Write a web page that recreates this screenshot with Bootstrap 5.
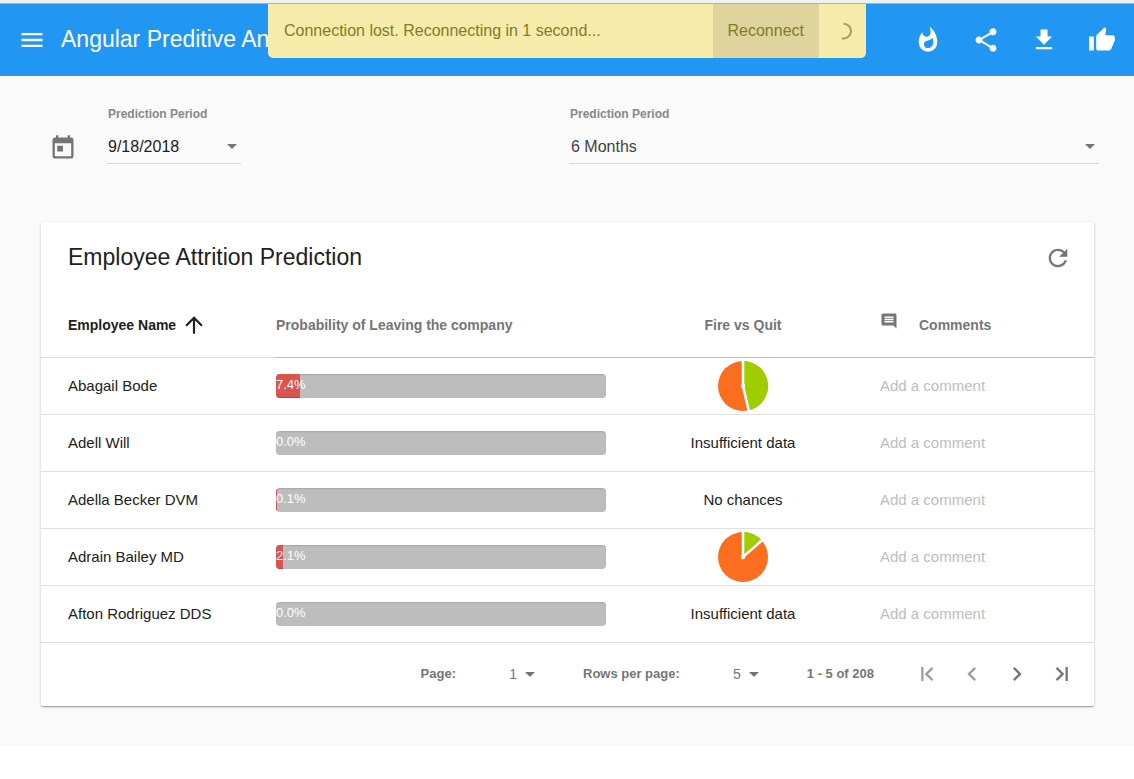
<!DOCTYPE html>
<html lang="en">
<head>
<meta charset="utf-8">
<meta name="viewport" content="width=device-width, initial-scale=1">
<title>Employee Attrition Prediction</title>
<link href="https://cdn.jsdelivr.net/npm/bootstrap@5.3.0/dist/css/bootstrap.min.css" rel="stylesheet">
<style>
  body { font-family: "Liberation Sans", Arial, sans-serif; font-size: 15px; line-height: 20px; color: #212121; background: #fff; }
  svg { display: block; fill: currentColor; }
  button { font: inherit; color: inherit; background: none; border: 0; padding: 0; }
  .window-edge { height: 4px; background: #f1f1f1; border-bottom: 1px solid #b2b2b2; }
  .app-bar { height: 72px; background: #2196f3; color: #fff; padding: 0 18px; }
  .app-title, .panel-title { font-size: 23px; line-height: 28px; font-weight: 400; margin: 0; padding-bottom: 2px; white-space: nowrap; }
  .app-title { margin-left: 15px; }
  .app-actions { gap: 30px; }
  .connection-toast { top: 4px; width: 598px; max-width: 100%; height: 54px; background: #f6ebab; color: #857b26; font-size: 16px; border-radius: 0 0 5px 5px; overflow: hidden; z-index: 5; }
  .connection-toast button { background: #dfd49d; padding: 0 15px; }
  .toast-wait { width: 47px; }
  .page-area { background: #fafafa; padding: 30px 40px 41px 41px; }
  .filters { margin: 0 -5px 58px -2px; }
  .field-label { font-size: 12px; line-height: 16px; font-weight: 700; color: #888; padding-left: 1px; margin-bottom: 8px; display: block; }
  .calendar-btn { padding: 0 18px 2px 10px; }
  .field-date { width: 134px; margin-left: 12px; }
  .field-control { width: 100%; height: 34px; border: 0; border-bottom: 1px solid #d8d8d8; border-radius: 0; background: transparent; font-size: 16px; color: #212121; padding: 0 30px 0 1px; appearance: none; outline: 0; }
  select.field-control { color: #424242; padding-left: 2px; }
  .caret { width: 10px; height: 5px; right: 4px; top: 14px; color: #757575; pointer-events: none; }
  .muted-ink { color: #757575; }
  .panel { background: #fff; border-radius: 2px; box-shadow: 0 1px 3px rgba(0,0,0,.2), 0 1px 1px rgba(0,0,0,.14), 0 2px 1px -1px rgba(0,0,0,.12); }
  .panel-head { height: 71px; padding: 0 22px 0 27px; }
  .grid-table { table-layout: fixed; width: 100%; }
  .grid-table th { height: 64px; font-size: 14px; color: #757575; border-bottom: 1px solid #bdbdbd; }
  .grid-table th:first-child { color: #212121; border-color: #e0e0e0; }
  .grid-table td { height: 57px; border-bottom: 1px solid #e0e0e0; }
  .grid-table tr > :nth-child(1) { padding-left: 27px; }
  .grid-table tr > :nth-child(2) { padding-right: 56px; }
  .grid-table tr > :nth-child(3) { text-align: center; }
  .grid-table tr > :nth-child(4) { padding-left: 56px; }
  .col-name { width: 234px; } .col-fire { width: 162px; } .col-note { width: 270px; }
  .sort-btn { gap: 5px; }
  .meter { height: 24px; background: #bdbdbd; border-radius: 4px; box-shadow: inset 0 1px 2px rgba(0,0,0,.12); }
  .meter .progress-bar { background: #d9534f; overflow: visible; text-align: left; color: #fff; font-size: 13px; line-height: 22px; justify-content: flex-start; box-shadow: inset 0 -1px 0 rgba(0,0,0,.15); }
  .note-btn { color: #bdbdbd; }
  .note-head { gap: 21px; }
  .note-icon { margin-bottom: 8px; }
  .pager { height: 63px; font-size: 13px; font-weight: 700; color: #757575; padding-right: 18px; }
  .pager-select { appearance: none; border: 0; background: transparent; width: 72px; padding: 0 18px 0 0; text-align: right; text-align-last: right; color: #757575; font-size: 14px; outline: 0; }
  .pager .caret { right: 0; top: 8px; }
  .pager-unit { margin-right: 48px; gap: 7px; }
  .pager-range { margin-right: 39px; }
  .pager-nav { gap: 17px; }
  .pager-nav button:disabled { opacity: .7; }
</style>
</head>
<body>
<div class="window-edge"></div>

<div class="connection-toast position-absolute start-50 translate-middle-x d-flex align-items-stretch" role="status">
  <span class="flex-grow-1 align-self-center ps-3">Connection lost. Reconnecting in 1 second...</span>
  <button type="button">Reconnect</button>
  <span class="toast-wait d-flex align-items-center justify-content-center">
    <svg width="18" height="18" viewBox="0 0 18 18" aria-hidden="true"><path d="M9.500 1.800a7.300 7.300 0 1 1-1.500 14.400" fill="none" stroke="#a69d56" stroke-width="2"/></svg>
  </span>
</div>

<header class="app-bar d-flex align-items-center">
  <button type="button" aria-label="Menu"><svg width="28" height="28" viewBox="0 0 24 24"><path d="M3 18h18v-2H3v2zm0-5h18v-2H3v2zm0-7v2h18V6H3z"/></svg></button>
  <h1 class="app-title">Angular Preditive An</h1>
  <div class="app-actions d-flex ms-auto">
    <button type="button" aria-label="Trending"><svg width="28" height="28" viewBox="0 0 24 24"><path d="M11.71,19C9.93,19 8.5,17.59 8.5,15.86C8.5,14.24 9.53,13.1 11.3,12.74C13.07,12.38 14.9,11.53 15.92,10.16C16.31,11.45 16.5,12.81 16.5,14.2C16.5,16.84 14.36,19 11.71,19M13.5,0.67C13.5,0.67 14.24,3.32 14.24,5.47C14.24,7.53 12.89,9.2 10.83,9.2C8.76,9.2 7.2,7.53 7.2,5.47L7.23,5.1C5.21,7.5 4,10.61 4,14A8,8 0 0,0 12,22A8,8 0 0,0 20,14C20,8.6 17.41,3.8 13.5,0.67Z"/></svg></button>
    <button type="button" aria-label="Share"><svg width="28" height="28" viewBox="0 0 24 24"><path d="M18 16.08c-.76 0-1.44.3-1.96.77L8.91 12.7c.05-.23.09-.46.09-.7s-.04-.47-.09-.7l7.05-4.11c.54.5 1.25.81 2.04.81 1.66 0 3-1.34 3-3s-1.34-3-3-3-3 1.34-3 3c0 .24.04.47.09.7L8.04 9.81C7.5 9.31 6.79 9 6 9c-1.66 0-3 1.34-3 3s1.34 3 3 3c.79 0 1.5-.31 2.04-.81l7.12 4.16c-.05.21-.08.43-.08.65 0 1.61 1.31 2.92 2.92 2.92s2.92-1.31 2.92-2.92-1.31-2.92-2.92-2.92z"/></svg></button>
    <button type="button" aria-label="Download"><svg width="28" height="28" viewBox="0 0 24 24"><path d="M19 9h-4V3H9v6H5l7 7 7-7zM5 18v2h14v-2H5z"/></svg></button>
    <button type="button" aria-label="Like"><svg width="28" height="28" viewBox="0 0 24 24"><path d="M1 21h4V9H1v12zm22-11c0-1.1-.9-2-2-2h-6.31l.95-4.57.03-.32c0-.41-.17-.79-.44-1.06L14.17 1 7.59 7.59C7.22 7.95 7 8.45 7 9v10c0 1.1.9 2 2 2h9c.83 0 1.54-.5 1.84-1.22l3.02-7.05c.09-.23.14-.47.14-.73v-2z"/></svg></button>
  </div>
</header>

<main class="page-area">
  <div class="filters row g-0">
    <div class="col-6 d-flex align-items-end">
      <button type="button" class="calendar-btn muted-ink" aria-label="Open calendar"><svg width="28" height="28" viewBox="0 0 24 24"><path d="M19 3h-1V1h-2v2H8V1H6v2H5c-1.11 0-1.99.9-1.99 2L3 19c0 1.1.89 2 2 2h14c1.1 0 2-.9 2-2V5c0-1.1-.9-2-2-2zm0 16H5V8h14v11zM7 10h5v5H7z"/></svg></button>
      <div class="field-date">
        <label class="field-label" for="start">Prediction Period</label>
        <div class="position-relative">
          <input class="field-control" id="start" type="text" value="9/18/2018">
          <svg class="caret position-absolute" viewBox="0 0 10 5"><path d="M0 0h10L5 5z"/></svg>
        </div>
      </div>
    </div>
    <div class="col-6">
      <label class="field-label" for="span">Prediction Period</label>
      <div class="position-relative">
        <select class="field-control" id="span"><option>6 Months</option></select>
        <svg class="caret position-absolute" viewBox="0 0 10 5"><path d="M0 0h10L5 5z"/></svg>
      </div>
    </div>
  </div>

  <section class="panel">
    <div class="panel-head d-flex align-items-center justify-content-between">
      <h2 class="panel-title">Employee Attrition Prediction</h2>
      <button type="button" class="muted-ink" aria-label="Refresh"><svg width="28" height="28" viewBox="0 0 24 24"><path d="M17.65 6.35C16.2 4.9 14.21 4 12 4c-4.42 0-7.99 3.58-7.99 8s3.57 8 7.99 8c3.73 0 6.84-2.55 7.73-6h-2.08c-.82 2.33-3.04 4-5.65 4-3.31 0-6-2.69-6-6s2.69-6 6-6c1.66 0 3.14.69 4.22 1.78L13 11h7V4l-2.35 2.35z"/></svg></button>
    </div>

    <table class="grid-table">
      <colgroup><col class="col-name"><col><col class="col-fire"><col class="col-note"></colgroup>
      <thead>
        <tr>
          <th scope="col"><button type="button" class="sort-btn d-flex align-items-center">Employee Name <svg width="26" height="26" viewBox="0 0 24 24"><path d="M4 12l1.41 1.41L11 7.83V20h2V7.83l5.58 5.59L20 12l-8-8-8 8z"/></svg></button></th>
          <th scope="col">Probability of Leaving the company</th>
          <th scope="col">Fire vs Quit</th>
          <th scope="col"><span class="note-head d-flex align-items-center"><svg class="note-icon" width="18" height="18" viewBox="0 0 24 24"><path d="M21.99 4c0-1.1-.89-2-1.99-2H4c-1.1 0-2 .9-2 2v12c0 1.1.9 2 2 2h14l4 4-.01-18zM18 14H6v-2h12v2zm0-3H6V9h12v2zm0-3H6V6h12v2z"/></svg>Comments</span></th>
        </tr>
      </thead>
      <tbody>
        <tr>
          <td>Abagail Bode</td>
          <td><div class="progress meter"><div class="progress-bar" style="width:7.4%">7.4%</div></div></td>
          <td><svg class="mx-auto" width="52" height="52" viewBox="0 0 52 52" role="img" aria-label="Fire versus quit"><circle cx="26" cy="26" r="25" fill="#fb6e20"/><path d="M26 26V1A25 25 0 0 1 31.620 50.360z" fill="#9fcd00"/><path d="M26 0v26l6 26" fill="none" stroke="#fff" stroke-width="2.6"/><circle cx="26" cy="26" r="2.2" fill="#fff"/></svg></td>
          <td><button type="button" class="note-btn">Add a comment</button></td>
        </tr>
        <tr>
          <td>Adell Will</td>
          <td><div class="progress meter"><div class="progress-bar" style="width:0%">0.0%</div></div></td>
          <td>Insufficient data</td>
          <td><button type="button" class="note-btn">Add a comment</button></td>
        </tr>
        <tr>
          <td>Adella Becker DVM</td>
          <td><div class="progress meter"><div class="progress-bar" style="width:0.1%">0.1%</div></div></td>
          <td>No chances</td>
          <td><button type="button" class="note-btn">Add a comment</button></td>
        </tr>
        <tr>
          <td>Adrain Bailey MD</td>
          <td><div class="progress meter"><div class="progress-bar" style="width:2.1%">2.1%</div></div></td>
          <td><svg class="mx-auto" width="52" height="52" viewBox="0 0 52 52" role="img" aria-label="Fire versus quit"><circle cx="26" cy="26" r="25" fill="#fb6e20"/><path d="M26 26V1A25 25 0 0 1 44.870 9.600z" fill="#9fcd00"/><path d="M26 0v26L46 8.6" fill="none" stroke="#fff" stroke-width="2.6"/><circle cx="26" cy="26" r="2.2" fill="#fff"/></svg></td>
          <td><button type="button" class="note-btn">Add a comment</button></td>
        </tr>
        <tr>
          <td>Afton Rodriguez DDS</td>
          <td><div class="progress meter"><div class="progress-bar" style="width:0%">0.0%</div></div></td>
          <td>Insufficient data</td>
          <td><button type="button" class="note-btn">Add a comment</button></td>
        </tr>
      </tbody>
    </table>

    <div class="pager d-flex align-items-center justify-content-end">
      <div class="pager-unit d-flex align-items-center">
        <label for="page">Page:</label>
        <div class="position-relative"><select class="pager-select" id="page"><option>1</option></select><svg class="caret position-absolute" viewBox="0 0 10 5"><path d="M0 0h10L5 5z"/></svg></div>
      </div>
      <div class="pager-unit d-flex align-items-center">
        <label for="rows">Rows per page:</label>
        <div class="position-relative"><select class="pager-select" id="rows"><option>5</option></select><svg class="caret position-absolute" viewBox="0 0 10 5"><path d="M0 0h10L5 5z"/></svg></div>
      </div>
      <span class="pager-range">1 - 5 of 208</span>
      <div class="pager-nav d-flex">
        <button type="button" aria-label="First page" disabled><svg width="28" height="28" viewBox="0 0 24 24"><path d="M7 6v12h2V6H7zm10.410 1.410L16 6l-6 6 6 6 1.410-1.410L12.830 12z"/></svg></button>
        <button type="button" aria-label="Previous page" disabled><svg width="28" height="28" viewBox="0 0 24 24"><path d="M15.410 7.410L14 6l-6 6 6 6 1.410-1.410L10.830 12z"/></svg></button>
        <button type="button" aria-label="Next page"><svg width="28" height="28" viewBox="0 0 24 24"><path d="M10 6L8.590 7.410 13.170 12l-4.580 4.590L10 18l6-6z"/></svg></button>
        <button type="button" aria-label="Last page"><svg width="28" height="28" viewBox="0 0 24 24"><path d="M15 6v12h2V6h-2zM8 6L6.590 7.410 11.170 12l-4.580 4.590L8 18l6-6z"/></svg></button>
      </div>
    </div>
  </section>
</main>
<script src="https://cdn.jsdelivr.net/npm/bootstrap@5.3.0/dist/js/bootstrap.bundle.min.js"></script>
</body>
</html>
